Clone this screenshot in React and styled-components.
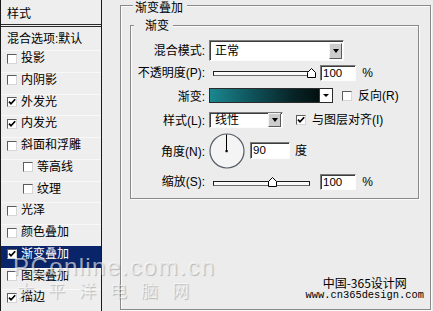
import React from 'react';
import styled, { createGlobalStyle } from 'styled-components';

const GlobalStyle = createGlobalStyle`
  html, body { margin: 0; padding: 0; background: #ececec; }
  body {
    font-family: "Liberation Sans", "Noto Sans CJK SC", sans-serif;
    font-size: 12px;
    color: #000;
  }
  * { box-sizing: border-box; }
`;

const Frame = styled.div`
  position: relative;
  width: 433px;
  height: 311px;
  overflow: hidden;
  display: flex;
  background: #ececec;
`;

/* ---------- left: style list ---------- */
const StylesPanel = styled.div`
  width: 102px;
  flex: none;
  border-left: 1px solid #1a1a1a;
  border-right: 1px solid #1a1a1a;
  background: #eeeeee;
  display: flex;
  flex-direction: column;
`;

const PanelHeader = styled.div`
  height: 27px;
  padding: 7px 0 0 6px;
  line-height: 14px;
  border-bottom: 3px double #2a2a2a;
`;

const BlendRow = styled.div`
  height: 24px;
  padding: 5px 0 0 6px;
  line-height: 14px;
`;

const StyleRow = styled.div`
  height: 21.75px;
  flex: none;
  border-top: 1px solid ${(p) => (p.$selected ? '#0a246a' : '#f8f8f8')};
  padding: 1px 0 0 ${(p) => (p.$indent ? 22 : 6)}px;
  background: ${(p) => (p.$selected ? '#0a246a' : 'transparent')};
  color: ${(p) => (p.$selected ? '#fff' : '#000')};
`;

const RowLabel = styled.div`
  display: flex;
  align-items: center;
  gap: 4px;
  height: 13px;
  line-height: 13px;
  white-space: nowrap;
`;

const BoxMark = styled.span`
  width: 10px;
  height: 10px;
  flex: none;
  border: 1px solid;
  border-color: #5c5c5c #d6d6d6 #d6d6d6 #5c5c5c;
  background: #fff;
  display: inline-flex;
  align-items: center;
  justify-content: center;
`;

function CheckBox({ checked }) {
  return (
    <BoxMark>
      {checked && (
        <svg width="8" height="8" viewBox="0 0 8 8">
          <path d="M1 3.6 L3 5.8 L7.2 1.2" stroke="#000" strokeWidth="1.7" fill="none" />
        </svg>
      )}
    </BoxMark>
  );
}

/* ---------- right: options ---------- */
const OptionsPanel = styled.div`
  flex: 1;
  display: flex;
  flex-direction: column;
  padding: 5px 2px 1px 18px;
`;

const GroupBox = styled.div`
  border: 1px solid #8a8a8a;
  box-shadow: inset 1px 1px 0 #fbfbfb, 1px 1px 0 #fbfbfb;
  display: flex;
  flex-direction: column;
`;

const OuterGroup = styled(GroupBox)`
  flex: 1;
  padding: 0 0 8px 9px;
`;

const InnerGroup = styled(GroupBox)`
  margin: 10.5px 11px 0 0;
  padding: 0 0 2px 0;
`;

const GroupTitle = styled.div`
  align-self: flex-start;
  height: 14px;
  line-height: 14px;
  margin: ${(p) => p.$top}px 0 0 3px;
  padding: 0 ${(p) => p.$padR}px 0 ${(p) => p.$padL}px;
  background: #ececec;
  white-space: nowrap;
`;

const FormGrid = styled.div`
  margin-top: 7px;
  display: grid;
  grid-template-columns: 74px 1fr;
  grid-template-rows: 21px 23px 23px 26px 35px 28px;
  column-gap: 4px;
`;

const FieldLabel = styled.div`
  justify-self: end;
  align-self: center;
  white-space: nowrap;
  line-height: 14px;
  padding-top: ${(p) => p.$dy || 0}px;
`;

const Controls = styled.div`
  display: flex;
  align-items: center;
  gap: ${(p) => p.$gap || 4}px;
  white-space: nowrap;
`;

const Sunken = styled.div`
  border: 1px solid;
  border-color: #7c7c7c #fcfcfc #fcfcfc #7c7c7c;
  box-shadow: inset 1px 1px 0 #3c3c3c;
  background: #fff;
`;

const SelectBox = styled(Sunken)`
  width: ${(p) => p.$w}px;
  height: ${(p) => p.$h}px;
  display: flex;
  align-items: center;
  justify-content: space-between;
  padding: 0 1px 0 5px;
  line-height: 14px;
`;

const DropButton = styled.span`
  width: 13px;
  height: ${(p) => p.$h}px;
  flex: none;
  background: #cccccc;
  border: 1px solid;
  border-color: #f4f4f4 #5a5a5a #5a5a5a #f4f4f4;
  display: flex;
  align-items: center;
  justify-content: center;
  &::after {
    content: '';
    border-left: 3.5px solid transparent;
    border-right: 3.5px solid transparent;
    border-top: 4px solid #000;
  }
`;

const NumberInput = styled(Sunken)`
  width: ${(p) => p.$w}px;
  height: ${(p) => p.$h}px;
  padding: 0 0 0 2px;
  font-size: 11.5px;
  line-height: ${(p) => p.$h - 2}px;
`;

const Unit = styled.span`
  font-size: 12px;
  line-height: 14px;
`;

const SliderWrap = styled.div`
  position: relative;
  width: 108px;
  height: 10px;
  display: flex;
  align-items: center;
`;

const SliderTrack = styled.div`
  margin: 2px 7px 0 4px;
  flex: 1;
  height: 5px;
  border: 1px solid #1e1e1e;
  border-bottom-color: #6a6a6a;
  background: #fafafa;
`;

const ThumbSvg = styled.svg`
  position: absolute;
  top: 0;
`;

function Slider({ value }) {
  const center = 4 + value * 98.8;
  return (
    <SliderWrap>
      <SliderTrack />
      <ThumbSvg width="9" height="10" viewBox="0 0 9 10" style={{ left: `${center - 4.5}px` }}>
        <polygon points="0.5,9.5 0.5,4.5 4.5,0.5 8.5,4.5 8.5,9.5" fill="#fff" stroke="#000" strokeWidth="1" />
      </ThumbSvg>
    </SliderWrap>
  );
}

const GradientPicker = styled.div`
  width: 124px;
  height: 15px;
  border: 1px solid #2a2a2a;
  display: flex;
  background: #fff;
`;

const GradientFill = styled.div`
  flex: 1;
  background: linear-gradient(to right, #1a8790 0%, #0f5058 40%, #082529 75%, #04100f 100%);
  border-right: 1px solid #3a3a3a;
`;

const GradientArrow = styled.div`
  width: 12px;
  display: flex;
  align-items: center;
  justify-content: center;
  &::after {
    content: '';
    border-left: 3px solid transparent;
    border-right: 3px solid transparent;
    border-top: 3px solid #000;
  }
`;

const CheckLabel = styled.span`
  display: inline-flex;
  align-items: center;
  gap: ${(p) => p.$gap}px;
  line-height: 14px;
`;

const Spacer = styled.div`
  flex: 1;
`;

const Credit = styled.div`
  align-self: flex-end;
  margin-right: 6px;
  text-align: center;
  line-height: 12px;
`;

const CreditTitle = styled.div`
  font-family: "Noto Sans CJK SC", sans-serif;
  font-size: 12px;
`;

const CreditUrl = styled.div`
  font-family: "Liberation Mono", monospace;
  font-size: 10.4px;
`;

/* ---------- watermark overlay ---------- */
const Watermark = styled.div`
  position: absolute;
  left: 13px;
  top: 254px;
  pointer-events: none;
  color: rgba(255, 255, 255, 0.6);
  text-shadow: 1px 1px 1px rgba(0, 0, 0, 0.22);
`;

const WatermarkBrand = styled.div`
  font-family: "Liberation Sans", sans-serif;
  font-size: 24px;
  line-height: 26px;
  letter-spacing: 1.4px;
`;

const WatermarkName = styled.div`
  font-family: "Noto Sans CJK SC", sans-serif;
  font-size: 17px;
  line-height: 18px;
  margin: 1px 0 0 4px;
  letter-spacing: 14px;
`;

const styleItems = [
  { label: '投影', checked: false },
  { label: '内阴影', checked: false },
  { label: '外发光', checked: true },
  { label: '内发光', checked: true },
  { label: '斜面和浮雕', checked: false },
  { label: '等高线', checked: false, indent: true },
  { label: '纹理', checked: false, indent: true },
  { label: '光泽', checked: false },
  { label: '颜色叠加', checked: false },
  { label: '渐变叠加', checked: true, selected: true },
  { label: '图案叠加', checked: false },
  { label: '描边', checked: true },
];

export default function App() {
  return (
    <>
      <GlobalStyle />
      <Frame>
        <StylesPanel>
          <PanelHeader>样式</PanelHeader>
          <BlendRow>混合选项:默认</BlendRow>
          {styleItems.map((it) => (
            <StyleRow key={it.label} $indent={it.indent} $selected={it.selected}>
              <RowLabel>
                <CheckBox checked={it.checked} />
                <span>{it.label}</span>
              </RowLabel>
            </StyleRow>
          ))}
        </StylesPanel>

        <OptionsPanel>
          <OuterGroup>
            <GroupTitle $top={-5.5} $padL={2} $padR={4}>渐变叠加</GroupTitle>
            <InnerGroup>
              <GroupTitle $top={-7} $padL={11} $padR={4}>渐变</GroupTitle>
              <FormGrid>
                <FieldLabel>混合模式:</FieldLabel>
                <Controls>
                  <SelectBox $w={135} $h={21}>
                    <span>正常</span>
                    <DropButton $h={16} />
                  </SelectBox>
                </Controls>

                <FieldLabel>不透明度(P):</FieldLabel>
                <Controls $gap={3}>
                  <Slider value={1} />
                  <NumberInput $w={36} $h={16}>100</NumberInput>
                  <Unit>&nbsp;%</Unit>
                </Controls>

                <FieldLabel $dy={2}>渐变:</FieldLabel>
                <Controls $gap={9}>
                  <GradientPicker>
                    <GradientFill />
                    <GradientArrow />
                  </GradientPicker>
                  <CheckLabel $gap={6}>
                    <CheckBox checked={false} />
                    <span>反向(R)</span>
                  </CheckLabel>
                </Controls>

                <FieldLabel $dy={2}>样式(L):</FieldLabel>
                <Controls $gap={13}>
                  <SelectBox $w={74} $h={16}>
                    <span>线性</span>
                    <DropButton $h={14} />
                  </SelectBox>
                  <CheckLabel $gap={6}>
                    <CheckBox checked />
                    <span>与图层对齐(I)</span>
                  </CheckLabel>
                </Controls>

                <FieldLabel $dy={3}>角度(N):</FieldLabel>
                <Controls $gap={5}>
                  <svg width="36" height="36" viewBox="0 0 36 36">
                    <circle cx="18" cy="18" r="17" fill="#f4f4f4" stroke="#555b66" strokeWidth="1.2" />
                    <line x1="17.5" y1="18" x2="17.5" y2="1.5" stroke="#000" strokeWidth="1" />
                    <rect x="16.5" y="17" width="2.2" height="2.2" fill="#000" />
                  </svg>
                  <NumberInput $w={40} $h={17}>90</NumberInput>
                  <Unit>度</Unit>
                </Controls>

                <FieldLabel>缩放(S):</FieldLabel>
                <Controls $gap={3}>
                  <Slider value={0.6} />
                  <NumberInput $w={36} $h={16}>100</NumberInput>
                  <Unit>&nbsp;%</Unit>
                </Controls>
              </FormGrid>
            </InnerGroup>
            <Spacer />
            <Credit>
              <CreditTitle>中国-365设计网</CreditTitle>
              <CreditUrl>www.cn365design.com</CreditUrl>
            </Credit>
          </OuterGroup>
        </OptionsPanel>

        <Watermark>
          <WatermarkBrand>PConline.com.cn</WatermarkBrand>
          <WatermarkName>太平洋电脑网</WatermarkName>
        </Watermark>
      </Frame>
    </>
  );
}
